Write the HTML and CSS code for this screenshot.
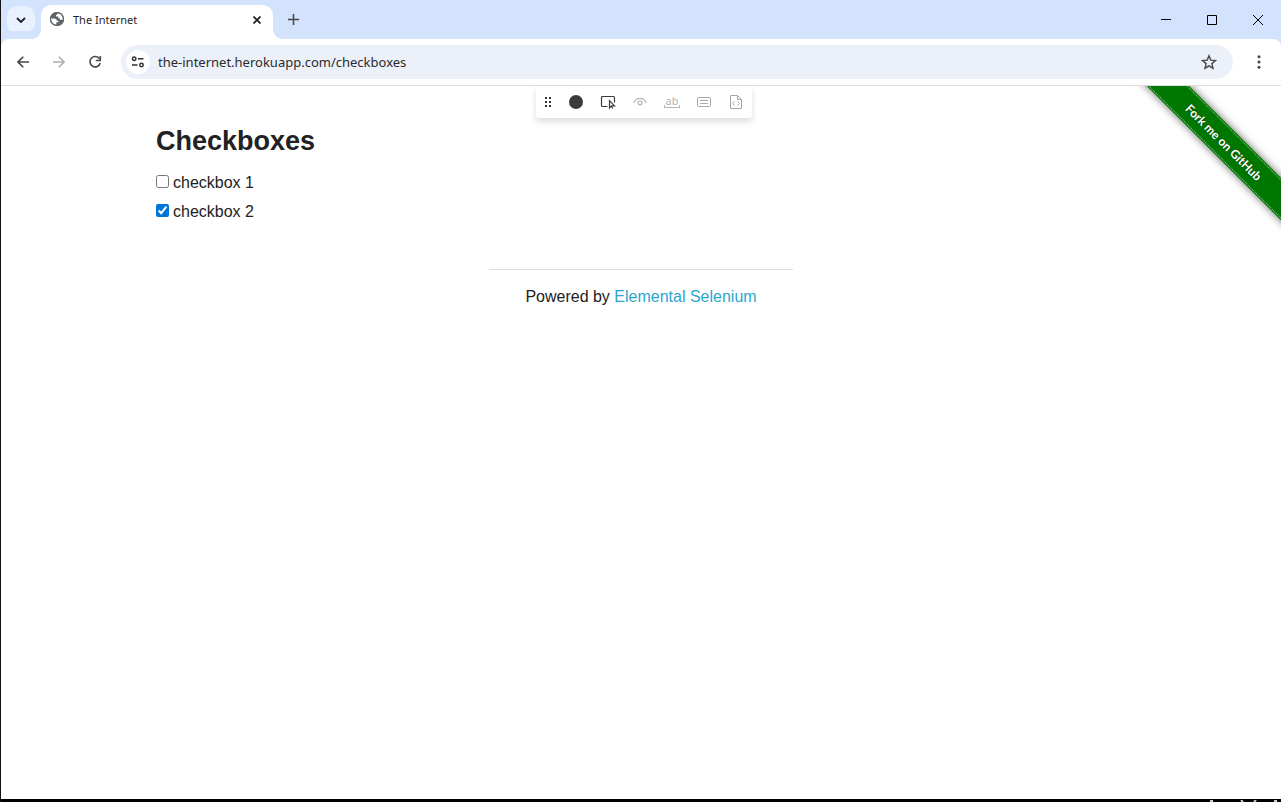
FILE: index.html
```html
<!DOCTYPE html>
<html lang="en">
<head>
<meta charset="utf-8">
<title>The Internet</title>
<link rel="stylesheet" href="styles.css">
</head>
<body>
<div class="window">
  <header class="tabstrip">
    <button class="tab-search" aria-label="Search tabs"><svg width="10" height="6" viewBox="0 0 10 6"><path d="M1 1l4 4 4-4" fill="none" stroke="#1f1f1f" stroke-width="1.8"/></svg></button>
    <div class="tab">
      <svg class="favicon" width="16" height="16" viewBox="0 0 16 16"><circle cx="8" cy="8" r="7" fill="#5f6368"/><path d="M1.8 7.5h3.4c1.6 0 2.7 1 2.7 2.2H9.400v1.500H7.300v2.500C4 13.600 1.700 11 1.800 7.500zM8.700 2.200c-.2 1.200-.6 1.700-1.700 1.700v1.700h2.200v1.600h1.600v1.600h3.200c.4-3-1.800-6.300-5.300-6.600z" fill="#fff"/><circle cx="8" cy="8" r="6.500" fill="none" stroke="#5f6368" stroke-width="1.200"/></svg>
      <span class="tab-title">The Internet</span>
      <button class="icon-button tab-close" aria-label="Close tab"><svg width="8" height="8" viewBox="0 0 8 8"><path d="M.5.5l7 7M7.500.5l-7 7" stroke="#1f1f1f" stroke-width="1.700"/></svg></button>
    </div>
    <button class="icon-button new-tab" aria-label="New tab"><svg width="11" height="11" viewBox="0 0 11 11"><path d="M5.500 0v11M0 5.500h11" stroke="#474747" stroke-width="1.500"/></svg></button>
    <div class="window-controls">
      <button class="icon-button" aria-label="Minimize"><svg width="10" height="10" viewBox="0 0 10 10"><path d="M0 4.500h10" stroke="#000"/></svg></button>
      <button class="icon-button" aria-label="Maximize"><svg width="10" height="10" viewBox="0 0 10 10"><path d="M.5.500h9v9h-9z" fill="none" stroke="#000"/></svg></button>
      <button class="icon-button" aria-label="Close"><svg width="10" height="10" viewBox="0 0 10 10"><path d="M0 0l10 10M10 0L0 10" stroke="#000"/></svg></button>
    </div>
  </header>
  <nav class="toolbar" aria-label="Browser toolbar">
    <button class="icon-button" aria-label="Back"><svg width="12" height="12" viewBox="0 0 12 12"><path d="M12 6H1.200M6.300.7L1 6l5.300 5.300" fill="none" stroke="#474747" stroke-width="1.600"/></svg></button>
    <button class="icon-button" aria-label="Forward" disabled><svg width="12" height="12" viewBox="0 0 12 12"><path d="M0 6h10.800M5.700.7L11 6l-5.300 5.300" fill="none" stroke="#b0b0b0" stroke-width="1.600"/></svg></button>
    <button class="icon-button" aria-label="Reload"><svg width="14" height="14" viewBox="0 0 14 14"><path d="M11.500 3.800A5.200 5.200 0 1 0 12.200 8" fill="none" stroke="#474747" stroke-width="1.600"/><path d="M12.300 1v4.500H7.800" fill="none" stroke="#474747" stroke-width="1.600"/></svg></button>
    <div class="omnibox">
      <button class="site-info" aria-label="View site information"><svg width="14" height="12" viewBox="0 0 14 12" fill="none" stroke="#303030" stroke-width="1.500"><circle cx="3.200" cy="2.700" r="1.700"/><path d="M7 2.700h5.500M1 9h5.500"/><circle cx="10.500" cy="9" r="1.700"/></svg></button>
      <input class="url" type="text" aria-label="Address" value="the-internet.herokuapp.com/checkboxes">
      <button class="icon-button" aria-label="Bookmark this tab"><svg width="16" height="16" viewBox="0 0 16 16"><path d="M8 1.800l1.800 4.300 4.700.4-3.600 3.100 1.100 4.600L8 11.800l-4 2.400 1.100-4.600L1.500 6.500l4.700-.4z" fill="none" stroke="#474747" stroke-width="1.400"/></svg></button>
    </div>
    <button class="icon-button menu" aria-label="Menu"><svg width="4" height="14" viewBox="0 0 4 14" fill="#474747"><circle cx="2" cy="1.700" r="1.500"/><circle cx="2" cy="7" r="1.500"/><circle cx="2" cy="12.300" r="1.500"/></svg></button>
  </nav>
  <main class="page">
    <div class="recorder" role="toolbar" aria-label="Recorder">
      <span class="grip"><svg width="16" height="16" viewBox="0 0 16 16" fill="#333"><path d="M5 3h2v2H5zM9 3h2v2H9zM5 7h2v2H5zM9 7h2v2H9zM5 11h2v2H5zM9 11h2v2H9z"/></svg></span>
      <button class="icon-button tool" aria-label="Record"><svg width="16" height="16" viewBox="0 0 16 16"><circle cx="8" cy="8" r="7" fill="#3b3b3b"/></svg></button>
      <button class="icon-button tool" aria-label="Pick locator"><svg width="16" height="16" viewBox="0 0 16 16" fill="none" stroke="#3b3b3b" stroke-width="1.200"><path d="M7.500 12.500h-5a1 1 0 0 1-1-1v-8a1 1 0 0 1 1-1h11a1 1 0 0 1 1 1v5"/><path d="M9.500 6.700v7.300l2-2.200h3z"/><path d="M11.500 12l1.200 2.500"/></svg></button>
      <button class="icon-button tool" aria-label="Assert visibility" disabled><svg width="16" height="16" viewBox="0 0 16 16" fill="none" stroke="#b5b5b5" stroke-width="1.200"><path d="M1.700 8.700C2.900 5.700 5.300 4.400 8 4.400s5.100 1.300 6.300 4.300"/><circle cx="8" cy="8.800" r="2"/></svg></button>
      <button class="icon-button tool tool-text" aria-label="Assert text" disabled><span>ab</span></button>
      <button class="icon-button tool" aria-label="Assert value" disabled><svg width="16" height="16" viewBox="0 0 16 16" fill="none" stroke="#a8a8a8"><rect x="1.500" y="3.500" width="13" height="9" rx="1"/><path d="M4 6.500h8M4 9.500h8"/></svg></button>
      <button class="icon-button tool" aria-label="Assert snapshot" disabled><svg width="16" height="16" viewBox="0 0 16 16" fill="none" stroke="#a8a8a8"><path d="M9.500 1.500h-7v13h11v-9zM9.500 1.500v4h4M6.500 7.500l-2 2 2 2M9.500 7.500l2 2-2 2"/></svg></button>
    </div>
    <div class="ribbon-corner"><a class="ribbon" href="#">Fork me on GitHub</a></div>
    <section class="content">
      <h3>Checkboxes</h3>
      <form class="checkboxes">
        <label><input type="checkbox">checkbox 1</label>
        <label><input type="checkbox" checked>checkbox 2</label>
      </form>
    </section>
    <footer class="powered">Powered by <a href="#">Elemental Selenium</a></footer>
  </main>
  <div class="desktop-edge"><svg width="71" height="2" viewBox="0 0 71 2" stroke="#ccc" stroke-width="3"><path d="M1.500 0v2M65.500 0v2"/><path d="M31 0l2 2M46 0l-2 2" stroke-width="2"/></svg></div>
</div>
</body>
</html>
```
FILE: styles.css
```css
* { box-sizing: border-box; }
body { margin: 0; background: #fff; color: #222; font-family: "Liberation Sans", Arial, sans-serif; }
button { padding: 0; border: 0; background: none; font: inherit; }
svg { display: block; }
.window { display: flex; flex-direction: column; min-height: 100vh; border-left: 1px solid #111; }
.icon-button { display: grid; place-items: center; flex: none; width: 36px; height: 32px; }

.tabstrip { display: flex; align-items: center; height: 39px; padding-left: 6px; background: #d3e2fd; }
.tab-search { display: grid; place-items: center; width: 28px; height: 28px; border-radius: 10px; background: #eaf1fe; }
.tab { position: relative; display: flex; align-items: center; align-self: flex-end; width: 232px; height: 34px; margin-left: 6px; padding-left: 8px; border-radius: 10px 10px 0 0; background: #fff; }
.tab::before, .tab::after { content: ""; position: absolute; bottom: 0; width: 10px; height: 10px; }
.tab::before { right: 100%; background: radial-gradient(circle at 0 0, #d3e2fd 10px, #fff 10px); }
.tab::after { left: 100%; background: radial-gradient(circle at 100% 0, #d3e2fd 10px, #fff 10px); }
.favicon { margin-bottom: 6px; }
.tab-title { flex: 1; margin: 0 0 4px 8px; color: #1f1f1f; font: 11px/16px "Noto Sans", sans-serif; }
.tab-close { width: 32px; margin-bottom: 5px; }
.new-tab { width: 40px; }
.window-controls { display: flex; margin-left: auto; }
.window-controls .icon-button { width: 46px; }

.toolbar { display: flex; align-items: center; height: 47px; padding-left: 4px; border-bottom: 1px solid #dedede; border-radius: 8px 8px 0 0; background: #fff; box-shadow: 0 -8px 0 #d3e2fd; }
.omnibox { display: flex; flex: 1; align-items: center; height: 34px; margin-left: 8px; padding: 0 6px 0 5px; border-radius: 17px; background: #ecf0f9; }
.site-info { display: grid; place-items: center; flex: none; width: 24px; height: 24px; border-radius: 50%; background: #fff; }
.url { flex: 1; min-width: 0; margin-left: 8px; padding: 0; border: 0; outline: 0; background: none; color: #2b2b2b; font: 13px/20px "Noto Sans", sans-serif; }
.menu { width: 48px; padding-left: 4px; }

.page { position: relative; flex: 1; }
.recorder { position: absolute; top: 0; left: 50%; display: flex; height: 32px; margin-left: -105px; border-radius: 0 0 3px 3px; background: #fff; box-shadow: 0 4px 6px #0002; }
.grip { display: grid; place-items: center; width: 24px; }
.tool { width: 32px; }
.tool-text { color: #b5b5b5; font: 11px/12px "Noto Sans", sans-serif; }
.tool-text span { position: relative; width: 16px; height: 12px; border-bottom: 1px solid #b5b5b5; line-height: 10px; text-align: center; }
.tool-text span::after { content: ""; position: absolute; inset: auto 0 0; height: 2px; border: solid #b5b5b5; border-width: 0 1px; }

.ribbon-corner { position: absolute; top: 0; right: 0; width: 150px; height: 150px; overflow: hidden; }
.ribbon { position: absolute; top: 41px; right: -53px; width: 220px; height: 30px; background: #070; box-shadow: 0 0 8px #0009; color: #fff; font: bold 12px/32px Lato, sans-serif; text-align: center; text-decoration: none; text-shadow: 0 0 2px #0008; transform: rotate(45deg); }
.ribbon::before { content: ""; position: absolute; inset: 1px 0; border: dotted #8fc98f; border-width: 1px 0; }

.content { max-width: 1000px; margin: 0 auto; padding: 35px 15px 0; }
h3 { margin: 0 0 7px; font-size: 27px; line-height: 40px; }
.checkboxes { display: flex; flex-direction: column; align-items: flex-start; }
.checkboxes label { display: flex; align-items: center; height: 29px; font-size: 16px; }
.checkboxes input { width: 13px; height: 13px; margin: 0 4px 2px 0; accent-color: #0075d8; }
.powered { width: 304px; margin: 43px auto 0; padding-top: 16px; border-top: 1px solid #ddd; font-size: 16px; line-height: 22px; text-align: center; }
.powered a { color: #2ba6cb; text-decoration: none; }
.desktop-edge { display: flex; justify-content: flex-end; height: 3px; padding-top: 1px; background: #000; }
```
